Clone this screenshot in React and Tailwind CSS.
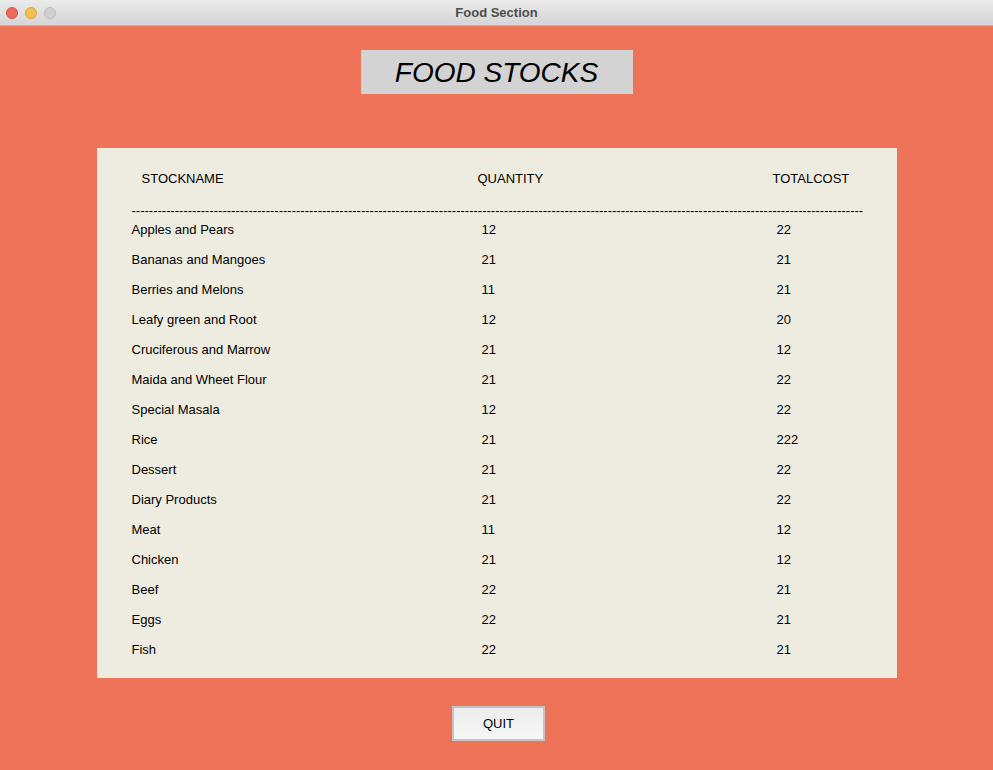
const ROWS = [
  ["Apples and Pears", "12", "22"],
  ["Bananas and Mangoes", "21", "21"],
  ["Berries and Melons", "11", "21"],
  ["Leafy green and Root", "12", "20"],
  ["Cruciferous and Marrow", "21", "12"],
  ["Maida and Wheet Flour", "21", "22"],
  ["Special Masala", "12", "22"],
  ["Rice", "21", "222"],
  ["Dessert", "21", "22"],
  ["Diary Products", "21", "22"],
  ["Meat", "11", "12"],
  ["Chicken", "21", "12"],
  ["Beef", "22", "21"],
  ["Eggs", "22", "21"],
  ["Fish", "22", "21"],
];

export default function App() {
  return (
    <div className="w-[993px] h-[770px] flex flex-col bg-[#ee7358] font-['Liberation_Sans',Arial,sans-serif] text-black overflow-hidden">
      {/* title bar */}
      <div className="h-[26px] shrink-0 flex items-center relative bg-gradient-to-b from-[#ebebeb] to-[#d5d5d5] border-b border-[#b4b4b4]">
        <div className="flex gap-[7px] pl-[6px]">
          <span className="w-3 h-3 rounded-full bg-[#ee6a5f] border border-[#d55249]" />
          <span className="w-3 h-3 rounded-full bg-[#f5bf4f] border border-[#d6a33f]" />
          <span className="w-3 h-3 rounded-full bg-[#d0d0d0] border border-[#bcbcbc]" />
        </div>
        <div className="absolute inset-0 flex items-center justify-center text-[13px] font-bold text-[#4d4d4d]">
          Food Section
        </div>
      </div>

      <div className="flex justify-center pt-6">
        <div className="w-[272px] h-[44px] bg-[#d3d3d3] flex items-center justify-center text-[28px] italic leading-none pt-[2px]">
          FOOD STOCKS
        </div>
      </div>

      <div className="mx-auto mt-[54px] w-[800px] h-[530px] bg-[#eeece0] text-[13px] pl-[35px] pr-[33px]">
        <div className="flex h-[56px] items-center pt-[6px]">
          <span className="w-[346px] pl-[10px]">STOCKNAME</span>
          <span className="w-[295px]">QUANTITY</span>
          <span>TOTALCOST</span>
        </div>
        <div className="w-[740px] h-[11px] leading-[14px] whitespace-nowrap">
          {"-".repeat(169)}
        </div>
        <div>
          {ROWS.map(([name, qty, cost]) => (
            <div key={name} className="flex h-[30px] items-center">
              <span className="w-[350px]">{name}</span>
              <span className="w-[295px]">{qty}</span>
              <span>{cost}</span>
            </div>
          ))}
        </div>
      </div>

      <div className="flex justify-center mt-[28px] pl-[4px]">
        <button className="w-[93px] h-[35px] border-2 border-[#c4c4c4] bg-gradient-to-b from-[#ececec] to-[#f7f7f7] text-[13px]">
          QUIT
        </button>
      </div>
    </div>
  );
}
